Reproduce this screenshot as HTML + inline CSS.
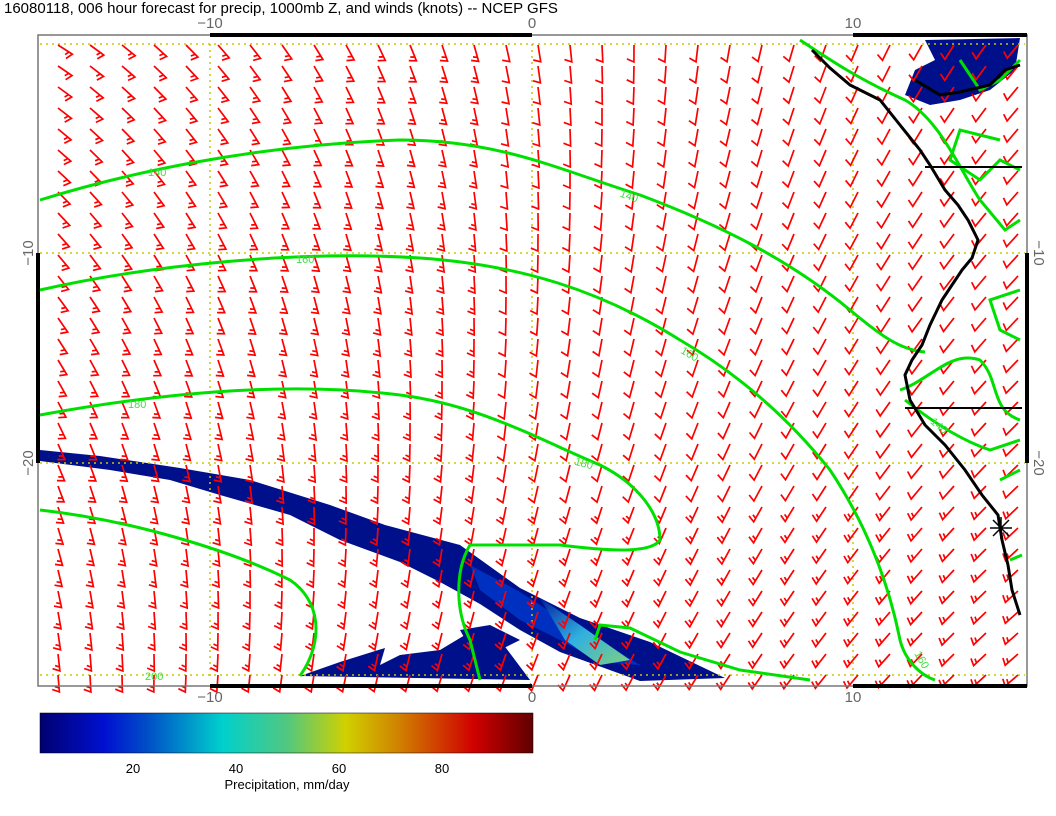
<!DOCTYPE html>
<html><head><meta charset="utf-8"><style>
html,body{margin:0;padding:0;background:#fff;width:1056px;height:816px;overflow:hidden}
svg{display:block}
text{font-family:"Liberation Sans",sans-serif}
</style></head><body>
<svg id="s" width="1056" height="816" viewBox="0 0 1056 816" xmlns="http://www.w3.org/2000/svg">
<defs>
<linearGradient id="cb" x1="0" x2="1" y1="0" y2="0">
<stop offset="0" stop-color="#000070"/><stop offset="0.13" stop-color="#0010d0"/><stop offset="0.22" stop-color="#0050c8"/>
<stop offset="0.37" stop-color="#00d0cc"/><stop offset="0.5" stop-color="#50c880"/><stop offset="0.62" stop-color="#d0d000"/>
<stop offset="0.73" stop-color="#d08000"/><stop offset="0.88" stop-color="#d00000"/><stop offset="1" stop-color="#600000"/>
</linearGradient>
<linearGradient id="st" x1="0" y1="0" x2="1" y2="1">
<stop offset="0" stop-color="#0020a0"/><stop offset="0.5" stop-color="#30b0e0"/><stop offset="1" stop-color="#80d080"/>
</linearGradient>
</defs>
<text x="4" y="13" font-size="15" fill="#000">16080118, 006 hour forecast for precip, 1000mb Z, and winds (knots) -- NCEP GFS</text>
<path d="M40,450 L100,456 L180,468 L250,480 L330,505 L385,525 L460,545 L520,588 L580,618 L650,642 L725,678 L640,681 L560,652 L520,630 L480,604 L440,582 L400,562 L340,540 L290,515 L220,495 L170,480 L110,470 L40,461Z" fill="#00108a"/>
<path d="M470,565 L520,592 L560,618 L600,640 L640,665 L600,662 L560,640 L520,620 L480,590Z" fill="#0030c0"/>
<path d="M540,598 L580,625 L630,660 L600,665 L565,640Z" fill="url(#st)"/>
<path d="M300,676 L340,662 L385,648 L380,665 L400,655 L440,650 L470,632 L500,640 L530,680 Z" fill="#00108a"/>
<path d="M460,630 L490,625 L520,640 L500,650 L470,648Z" fill="#00108a"/>
<path d="M925,40 L1020,38 L1015,70 L990,90 L960,100 L930,105 L905,95 L915,70 L935,60Z" fill="#00108a"/>
<g stroke="#c8c800" stroke-width="1.5" stroke-dasharray="2,4" fill="none">
<line x1="210" y1="44" x2="210" y2="676"/><line x1="532" y1="44" x2="532" y2="676"/><line x1="853" y1="44" x2="853" y2="676"/>
<line x1="40" y1="44" x2="1025" y2="44"/><line x1="40" y1="253" x2="1025" y2="253"/><line x1="40" y1="463" x2="1025" y2="463"/><line x1="40" y1="675" x2="1025" y2="675"/>
</g>
<g id="barbs" stroke="#ff0000" stroke-width="1.7" fill="none"></g>
<g stroke="#00e000" stroke-width="3" fill="none">
<path d="M40,200 C120,175 250,145 400,140 C500,140 560,170 640,195 C720,225 790,260 850,310 C880,335 900,350 925,352"/>
<path d="M40,290 C150,265 300,250 420,258 C520,265 600,290 680,340 C740,375 790,420 830,470 C870,530 890,590 900,640 C905,660 920,675 935,680"/>
<path d="M40,415 C150,395 280,380 400,395 C480,405 540,440 600,465 C640,485 660,515 660,540 C650,555 600,550 560,545 L470,545 C455,570 455,610 470,640 L480,680"/>
<path d="M40,510 C130,520 230,550 290,580 C320,600 325,640 300,676"/>
<path d="M595,640 L600,625 L630,628 L680,652 L740,670 L810,680"/>
<path d="M900,390 C930,380 950,350 980,360 C1000,380 990,410 1020,420 M1020,290 L990,300 L1000,330 L1020,340"/>
<path d="M800,40 C830,60 860,80 905,100 C940,120 960,170 980,200 L1005,230 L1020,220 M960,60 L980,90 L1000,80 L1020,60 M1000,140 L960,130 L950,160 L980,180 L1000,160 L1020,170"/>
<path d="M905,400 C930,420 960,440 990,450 L1020,440 M1000,480 L1020,470 M1010,560 L1022,555"/>
</g>
<g fill="#40e040" font-size="11"><text x="148" y="176">140</text><text x="620" y="200" transform="rotate(20 630 196)">140</text><text x="296" y="263">160</text><text x="680" y="358" transform="rotate(30 690 355)">160</text><text x="128" y="408">180</text><text x="575" y="466" transform="rotate(15 580 462)">180</text><text x="145" y="680">200</text><text x="930" y="430" transform="rotate(40 940 426)">140</text><text x="915" y="660" transform="rotate(60 920 656)">160</text></g>
<g stroke="#000" stroke-width="3" fill="none">
<path d="M812,50 L830,68 L850,85 L880,100 L900,125 L920,150 L930,165 L945,190 L958,205 L968,220 L978,240 L972,258 L962,270 L952,285 L942,300 L930,325 L922,345 L912,360 L905,375 L910,400 L925,425 L945,445 L965,470 L982,495 L998,515 L1002,540 L1008,565 L1012,590 L1020,615"/>
<path d="M925,167 L1022,167 M905,408 L1022,408" stroke-width="2"/>
<path d="M915,80 L940,95 L960,92 L990,85 L1005,70 L1020,65"/>
</g>
<g stroke="#000" stroke-width="1.5"><path d="M990,528 L1012,528 M1001,517 L1001,539 M993,520 L1009,536 M1009,520 L993,536"/></g>
<rect x="38" y="35" width="989" height="651" fill="none" stroke="#777" stroke-width="1.5"/>
<g fill="#000"><rect x="210" y="33" width="322" height="4"/><rect x="853" y="33" width="174" height="4"/>
<rect x="210" y="684" width="322" height="4"/><rect x="853" y="684" width="174" height="4"/>
<rect x="36" y="253" width="4" height="210"/><rect x="1025" y="253" width="4" height="210"/></g>
<g fill="#666" font-size="15" text-anchor="middle">
<text x="210" y="28">−10</text><text x="532" y="28">0</text><text x="853" y="28">10</text>
<text x="210" y="702">−10</text><text x="532" y="702">0</text><text x="853" y="702">10</text>
<text transform="translate(33,253) rotate(-90)">−10</text><text transform="translate(33,463) rotate(-90)">−20</text>
<text transform="translate(1034,253) rotate(90)">−10</text><text transform="translate(1034,463) rotate(90)">−20</text>
</g>
<rect x="40" y="713" width="493" height="40" fill="url(#cb)" stroke="#000" stroke-width="0.5"/>
<g font-size="13" fill="#000" text-anchor="middle"><text x="133" y="773">20</text><text x="236" y="773">40</text><text x="339" y="773">60</text><text x="442" y="773">80</text><text x="287" y="789">Precipitation, mm/day</text></g>
</svg>
<script>
var g=document.getElementById('barbs'),h='';
for(var y=45;y<685;y+=21){for(var x=58;x<1022;x+=32){
var fx=(x-40)/990,fy=(y-35)/650;
var a=(30+100*fx+45*fy*(1-fx)+10*fy)*Math.PI/180;
if(a>2.6)a=2.6;
var L=17,dx=Math.cos(a),dy=Math.sin(a);
var x2=x+dx*L,y2=y+dy*L;
var fxx=-dy*7-dx*3,fyy=dx*7-dy*3;
var p='M'+x.toFixed(1)+','+y.toFixed(1)+'L'+x2.toFixed(1)+','+y2.toFixed(1)+'l'+fxx.toFixed(1)+','+fyy.toFixed(1);
if(fx<0.45||fy>0.7){var x3=x2-dx*4,y3=y2-dy*4;p+='M'+x3.toFixed(1)+','+y3.toFixed(1)+'l'+(fxx*0.6).toFixed(1)+','+(fyy*0.6).toFixed(1);}
h+='<path d="'+p+'"/>';}}
g.innerHTML=h;
</script>
</body></html>
